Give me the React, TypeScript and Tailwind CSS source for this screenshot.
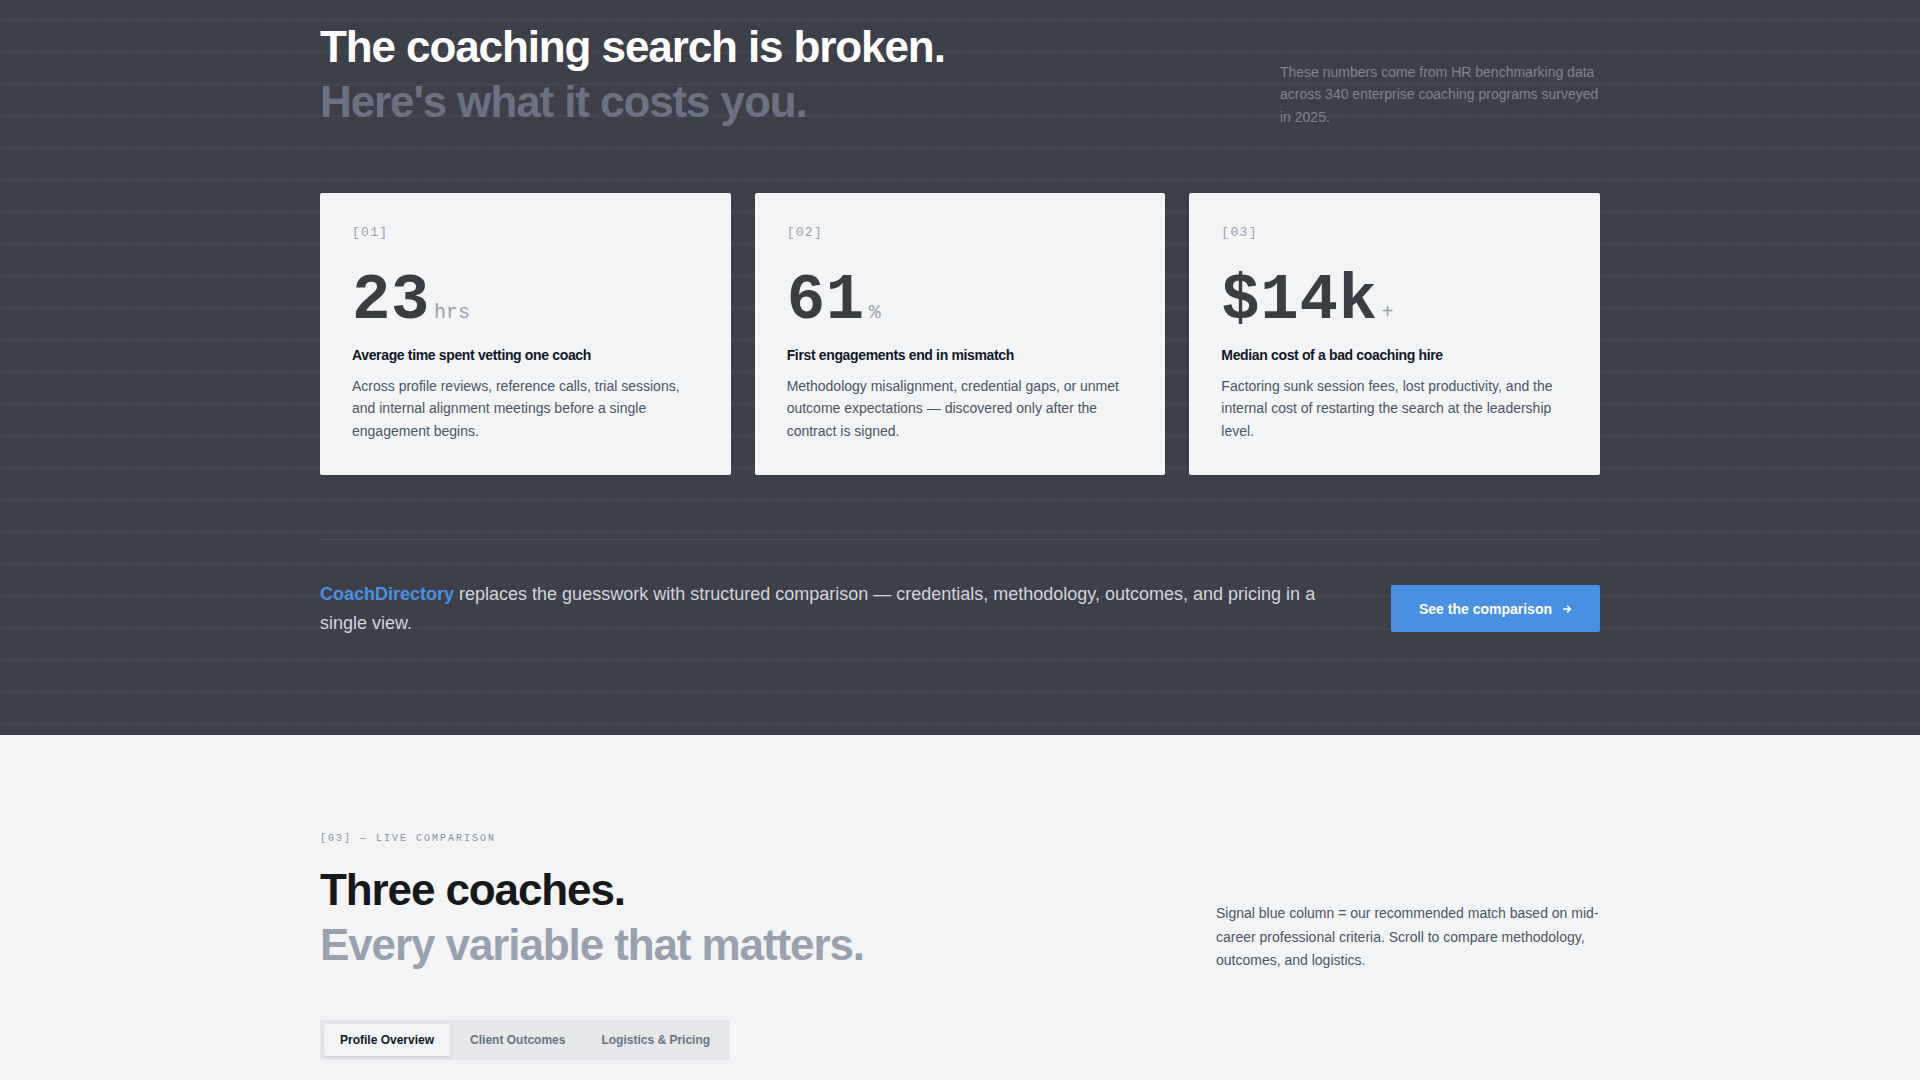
const stats = [
  {
    id: "[01]",
    value: "23",
    unit: "hrs",
    title: "Average time spent vetting one coach",
    body: "Across profile reviews, reference calls, trial sessions, and internal alignment meetings before a single engagement begins.",
  },
  {
    id: "[02]",
    value: "61",
    unit: "%",
    title: "First engagements end in mismatch",
    body: "Methodology misalignment, credential gaps, or unmet outcome expectations — discovered only after the contract is signed.",
  },
  {
    id: "[03]",
    value: "$14k",
    unit: "+",
    title: "Median cost of a bad coaching hire",
    body: "Factoring sunk session fees, lost productivity, and the internal cost of restarting the search at the leadership level.",
  },
];

const tabs = ["Profile Overview", "Client Outcomes", "Logistics & Pricing"];

const StatCard = ({ stat }: { stat: (typeof stats)[number] }) => (
  <div className="bg-gray-100 rounded-xs px-8 pt-8 pb-[33px]">
    <div className="font-['Liberation_Mono',monospace] text-[13px] leading-4 tracking-[0.1em] text-gray-400">
      {stat.id}
    </div>
    <div className="mt-7 flex items-baseline">
      <span className="font-['Liberation_Mono',monospace] text-[64px] leading-none font-bold tracking-[0.01em] text-[#3a3d44]">
        {stat.value}
      </span>
      <span className="ml-1 font-['Liberation_Mono',monospace] text-xl leading-none text-gray-400">
        {stat.unit}
      </span>
    </div>
    <h3 className="mt-3 text-sm leading-5 font-bold tracking-tight text-gray-900">
      {stat.title}
    </h3>
    <p className="mt-2.5 text-sm leading-[1.6] text-gray-600">{stat.body}</p>
  </div>
);

export default function App() {
  return (
    <div className="font-['Liberation_Sans',Arial,sans-serif] min-h-screen bg-gray-100">
      {/* dark stats section */}
      <section className="bg-[#3d4048] bg-[linear-gradient(to_right,rgba(0,0,0,0.08)_1px,transparent_1px),linear-gradient(to_bottom,rgba(255,255,255,0.05)_1px,transparent_1px)] bg-[size:32px_32px] bg-[position:2px_20px]">
        <div className="max-w-[1280px] mx-auto pt-[19px] pb-[97px]">
          <div className="flex justify-between items-end">
            <h2 className="text-[44px] leading-[1.25] font-bold tracking-tight">
              <span className="block text-white">The coaching search is broken.</span>
              <span className="block text-gray-500">Here's what it costs you.</span>
            </h2>
            <p className="max-w-xs pb-[1px] text-sm leading-[1.6] text-[#80848c]">
              These numbers come from HR benchmarking data across 340 enterprise coaching programs surveyed in 2025.
            </p>
          </div>

          <div className="mt-[64px] grid grid-cols-3 gap-6">
            {stats.map((s) => (
              <StatCard key={s.id} stat={s} />
            ))}
          </div>

          <div className="mt-[64px] border-t border-white/[0.08] pt-10 flex items-center justify-between gap-12">
            <p className="max-w-5xl text-lg leading-[1.6] text-gray-300">
              <span className="font-semibold text-[#4a90e2]">CoachDirectory</span> replaces the guesswork with structured comparison — credentials, methodology, outcomes, and pricing in a single view.
            </p>
            <button className="h-[47px] shrink-0 px-7 flex items-center rounded-xs bg-[#4a90e2] text-sm font-bold text-white">
              See the comparison
              <svg className="ml-2.5" width="10" height="10" viewBox="0 0 10 10" fill="none">
                <path d="M1.5 5h7M5.5 2l3 3-3 3" stroke="currentColor" strokeWidth="1.6" strokeLinecap="round" strokeLinejoin="round" />
              </svg>
            </button>
          </div>
        </div>
      </section>

      {/* live comparison section */}
      <section className="bg-gray-100">
        <div className="max-w-[1280px] mx-auto pt-24 pb-24">
          <div className="font-['Liberation_Mono',monospace] text-[10px] leading-4 tracking-[0.2em] uppercase text-[#8a8f98]">
            [03] — Live comparison
          </div>
          <div className="mt-[15px] flex justify-between items-end">
            <h2 className="text-[44px] leading-[1.25] font-bold tracking-tight">
              <span className="block text-[#17181a]">Three coaches.</span>
              <span className="block text-gray-400">Every variable that matters.</span>
            </h2>
            <p className="max-w-sm text-sm leading-[1.65] text-gray-600">
              Signal blue column = our recommended match based on mid-career professional criteria. Scroll to compare methodology, outcomes, and logistics.
            </p>
          </div>

          <div className="mt-12 inline-flex gap-1 p-1 bg-gray-200 rounded-xs">
            {tabs.map((t, i) => (
              <button
                key={t}
                className={
                  i === 0
                    ? "px-4 py-2 text-xs leading-4 font-bold text-gray-900 bg-gray-100 rounded-xs shadow-sm"
                    : "px-4 py-2 text-xs leading-4 font-bold text-gray-500"
                }
              >
                {t}
              </button>
            ))}
          </div>
        </div>
      </section>
    </div>
  );
}
